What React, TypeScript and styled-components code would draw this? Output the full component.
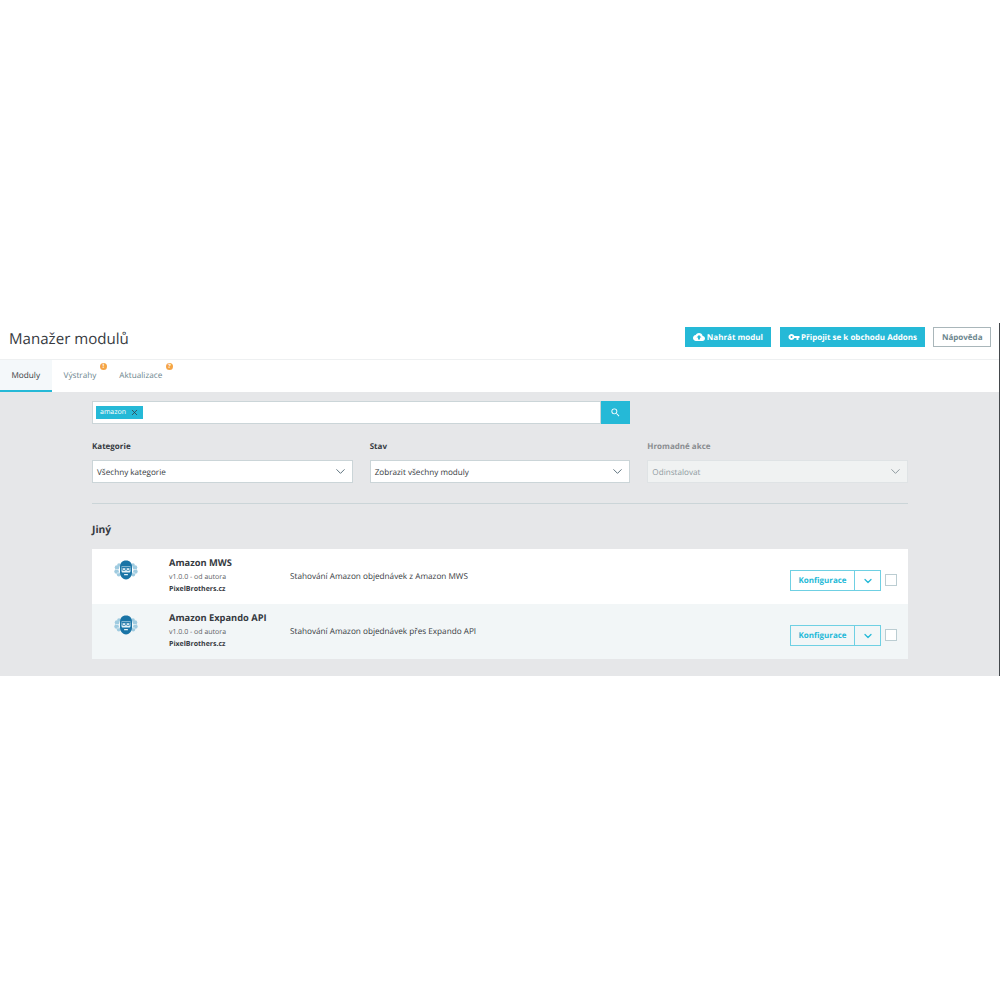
import React from 'react'
import styled, { createGlobalStyle } from 'styled-components'
import { ChevronDown, X } from 'lucide-react'

const GlobalStyle = createGlobalStyle`
  html, body {
    margin: 0;
    padding: 0;
    background: #fff;
    font-family: "Open Sans", "Liberation Sans", sans-serif;
    text-rendering: geometricPrecision;
  }
  * { box-sizing: border-box; }
`
const Page = styled.div`
  width: 1000px;
  height: 1000px;
  padding-top: 323px;
`
const Frame = styled.div`
  height: 353px;
  display: flex;
  flex-direction: column;
  border-right: 1px solid #44484c;
`
const Header = styled.header`
  height: 37px;
  display: flex;
  align-items: flex-start;
  justify-content: space-between;
  padding: 4px 8px 0 9px;
  border-bottom: 1px solid #eef0f1;
`
const Title = styled.h1`
  margin: 0;
  font-size: 15.1px;
  line-height: 24px;
  font-weight: 400;
  color: #363a41;
`
const HeaderActions = styled.div`
  display: flex;
  gap: 8.5px;
`
const HeadButton = styled.button<{ $outline?: boolean }>`
  height: 20px;
  padding: 0 ${p => (p.$outline ? '7.5px' : '7px')};
  display: flex;
  align-items: center;
  gap: 1.5px;
  font: 700 8px "Open Sans", sans-serif;
  text-rendering: geometricPrecision;
  color: ${p => (p.$outline ? '#6c868e' : '#fff')};
  background: ${p => (p.$outline ? '#fff' : '#25b9d7')};
  border: 1px solid ${p => (p.$outline ? '#a9b6ba' : '#25b9d7')};
`
const Tabs = styled.nav`
  height: 32px;
  display: flex;
  background: #fff;
  box-shadow: 0 1px 1px rgba(0, 0, 0, 0.06);
`
const Tab = styled.div<{ $active?: boolean }>`
  position: relative;
  height: 32px;
  padding: 0 11.5px;
  margin-right: ${p => (p.$active ? '0.5px' : '0')};
  display: flex;
  align-items: center;
  font-size: 8.2px;
  color: ${p => (p.$active ? '#363a41' : '#6c868e')};
  background: ${p => (p.$active ? '#f4f8fa' : '#fff')};
  border-bottom: 2px solid ${p => (p.$active ? '#25b9d7' : 'transparent')};
`
const Badge = styled.span`
  position: absolute;
  top: 3px;
  right: 1px;
  width: 7px;
  height: 7px;
  border-radius: 50%;
  background: #f5a445;
  color: #fff;
  font-size: 6px;
  font-weight: 700;
  line-height: 7px;
  text-align: center;
`
const Content = styled.main`
  flex: 1;
  background: #e6e7e9;
  padding: 9px 92px 0;
`
const SearchRow = styled.div`
  width: 538px;
  height: 23px;
  display: flex;
`
const SearchField = styled.div`
  flex: 1;
  background: #fff;
  border: 1px solid #cbd5d8;
  padding: 4px 3px;
  display: flex;
`
const Tag = styled.span`
  height: 13px;
  width: 47px;
  padding: 0 4px;
  display: flex;
  align-items: center;
  justify-content: space-between;
  background: #25b9d7;
  color: #fff;
  font-size: 7px;
`
const SearchButton = styled.button`
  width: 29px;
  border: 0;
  padding: 0;
  display: flex;
  align-items: center;
  justify-content: center;
  background: #25b9d7;
  color: #fff;
`
const Filters = styled.div`
  display: flex;
  gap: 17px;
  margin-top: 17px;
  padding-bottom: 20px;
  border-bottom: 1px solid #cbd5d8;
  width: 816px;
`
const Filter = styled.div<{ $disabled?: boolean }>`
  width: 261px;
  color: ${p => (p.$disabled ? '#8a8d90' : '#363a41')};
`
const FilterLabel = styled.div`
  font-size: 8px;
  font-weight: 700;
  line-height: 12px;
  margin-bottom: 7px;
`
const Select = styled.div<{ $disabled?: boolean }>`
  height: 23px;
  padding: 1px 4px 0 4px;
  display: flex;
  align-items: center;
  justify-content: space-between;
  font-size: 8.15px;
  color: ${p => (p.$disabled ? '#8f9aa0' : '#363a41')};
  background: ${p => (p.$disabled ? '#f0f2f2' : '#fff')};
  border: 1px solid ${p => (p.$disabled ? '#dfe3e5' : '#cbd5d8')};
  svg {
    margin-top: -1px;
    color: ${p => (p.$disabled ? '#8f9aa0' : '#5f7480')};
  }
`
const SectionTitle = styled.h2`
  margin: 18px 0 11px;
  font-size: 10.3px;
  line-height: 16px;
  font-weight: 700;
  color: #363a41;
`
const List = styled.div`
  width: 816px;
`
const Row = styled.div<{ $shaded?: boolean }>`
  height: 55px;
  display: flex;
  background: ${p => (p.$shaded ? '#f2f6f7' : '#fff')};
`
const LogoCell = styled.div`
  width: 77px;
  padding: 11px 0 0 22px;
`
const Info = styled.div`
  width: 121px;
  padding-top: 7px;
  color: #363a41;
`
const ModuleName = styled.div`
  font-size: 9.3px;
  line-height: 14px;
  font-weight: 700;
  white-space: nowrap;
`
const Meta = styled.div`
  font-size: 7px;
  line-height: 12px;
  margin-top: 2px;
  color: #5d6165;
`
const Author = styled.div`
  font-size: 7px;
  line-height: 12px;
  font-weight: 700;
`
const Description = styled.div`
  flex: 1;
  padding-top: 22px;
  font-size: 8.2px;
  line-height: 12px;
  color: #363a41;
`
const Actions = styled.div`
  display: flex;
  align-items: flex-start;
  gap: 4px;
  padding: 21px 11px 0 0;
`
const Split = styled.div`
  height: 21px;
  display: flex;
  border: 1px solid #6fd0e3;
  color: #25b9d7;
`
const ConfigButton = styled.div`
  width: 64px;
  display: flex;
  align-items: center;
  justify-content: center;
  font-size: 8px;
  font-weight: 700;
  border-right: 1px solid #6fd0e3;
`
const CaretButton = styled.div`
  width: 25px;
  display: flex;
  align-items: center;
  justify-content: center;
`
const Check = styled.div`
  width: 12px;
  height: 12px;
  margin-top: 4px;
  background: #fff;
  border: 1px solid #bbcdd2;
`

function CloudIcon() {
  return (
    <svg width="12" height="12" viewBox="0 0 24 24" fill="#fff">
      <path d="M19.35 10.04C18.67 6.59 15.64 4 12 4 9.11 4 6.6 5.64 5.35 8.04 2.34 8.36 0 10.91 0 14c0 3.31 2.69 6 6 6h13c2.76 0 5-2.24 5-5 0-2.64-2.05-4.78-4.65-4.96zM14 13v4h-4v-4H7l5-5 5 5h-3z" />
    </svg>
  )
}

function KeyIcon() {
  return (
    <svg width="12" height="12" viewBox="0 0 24 24" fill="#fff">
      <path d="M12.65 10C11.83 7.67 9.61 6 7 6c-3.31 0-6 2.69-6 6s2.69 6 6 6c2.61 0 4.83-1.67 5.65-4H17v4h4v-4h2v-4H12.65zM7 14c-1.1 0-2-.9-2-2s.9-2 2-2 2 .9 2 2-.9 2-2 2z" />
    </svg>
  )
}

function SearchIcon() {
  return (
    <svg width="11" height="11" viewBox="0 0 24 24" fill="#fff">
      <path d="M15.5 14h-.79l-.28-.27A6.47 6.47 0 0 0 16 9.5 6.5 6.5 0 1 0 9.5 16c1.61 0 3.09-.59 4.23-1.57l.27.28v.79l5 4.99L20.49 19l-4.99-5zm-6 0C7.01 14 5 11.99 5 9.5S7.01 5 9.5 5 14 7.01 14 9.5 11.99 14 9.5 14z" />
    </svg>
  )
}

// head with hat, glasses and beard between two light, brain-like ears
function Logo() {
  return (
    <svg width="24" height="20" viewBox="0 0 24 20">
      <g fill="#9fcbe0">
        <circle cx="3" cy="7.5" r="2.3" />
        <circle cx="2.6" cy="11.5" r="2.3" />
        <circle cx="4.8" cy="14.5" r="2" />
        <circle cx="5" cy="5" r="1.8" />
        <circle cx="21" cy="7.5" r="2.3" />
        <circle cx="21.4" cy="11.5" r="2.3" />
        <circle cx="19.2" cy="14.5" r="2" />
        <circle cx="19" cy="5" r="1.8" />
      </g>
      <path d="M2 9.5h3M19 9.5h3M3 13h2.5M18.5 13H21" stroke="#e4f1f7" strokeWidth="0.7" />
      <path d="M12 0.5c4 0 6 2.6 6 6.5v5.5c0 4-3 7-6 7s-6-3-6-7V7c0-3.900 2-6.500 6-6.500z" fill="#1a74a6" />
      <path d="M7.500 6.500h9v4.500c0 1-.6 1.500-1.500 1.500H9c-.9 0-1.500-.5-1.500-1.500z" fill="#e4f1f7" />
      <path d="M7.500 7.500h9" stroke="#1a74a6" strokeWidth="0.9" />
      <rect x="8.300" y="7.800" width="3.200" height="2.600" rx="0.8" fill="none" stroke="#1a74a6" strokeWidth="0.8" />
      <rect x="12.500" y="7.800" width="3.200" height="2.600" rx="0.8" fill="none" stroke="#1a74a6" strokeWidth="0.8" />
      <rect x="10" y="14" width="4" height="1.300" rx="0.6" fill="#e4f1f7" />
    </svg>
  )
}

function Module(props: { name: string; description: string; shaded?: boolean }) {
  return (
    <Row $shaded={props.shaded}>
      <LogoCell><Logo /></LogoCell>
      <Info>
        <ModuleName>{props.name}</ModuleName>
        <Meta>v1.0.0 - od autora</Meta>
        <Author>PixelBrothers.cz</Author>
      </Info>
      <Description>{props.description}</Description>
      <Actions>
        <Split>
          <ConfigButton>Konfigurace</ConfigButton>
          <CaretButton><ChevronDown size={12} strokeWidth={2.5} /></CaretButton>
        </Split>
        <Check />
      </Actions>
    </Row>
  )
}

export default function App() {
  return (
    <Page>
      <GlobalStyle />
      <Frame>
        <Header>
          <Title>Manažer modulů</Title>
          <HeaderActions>
            <HeadButton><CloudIcon />Nahrát modul</HeadButton>
            <HeadButton><KeyIcon />Připojit se k obchodu Addons</HeadButton>
            <HeadButton $outline>Nápověda</HeadButton>
          </HeaderActions>
        </Header>
        <Tabs>
          <Tab $active>Moduly</Tab>
          <Tab>Výstrahy<Badge>!</Badge></Tab>
          <Tab>Aktualizace<Badge>?</Badge></Tab>
        </Tabs>
        <Content>
          <SearchRow>
            <SearchField>
              <Tag>amazon<X size={9} color="#363a41" /></Tag>
            </SearchField>
            <SearchButton><SearchIcon /></SearchButton>
          </SearchRow>
          <Filters>
            <Filter>
              <FilterLabel>Kategorie</FilterLabel>
              <Select>Všechny kategorie<ChevronDown size={15} strokeWidth={1.6} /></Select>
            </Filter>
            <Filter>
              <FilterLabel>Stav</FilterLabel>
              <Select>Zobrazit všechny moduly<ChevronDown size={15} strokeWidth={1.6} /></Select>
            </Filter>
            <Filter $disabled>
              <FilterLabel>Hromadné akce</FilterLabel>
              <Select $disabled>Odinstalovat<ChevronDown size={15} strokeWidth={1.6} /></Select>
            </Filter>
          </Filters>
          <SectionTitle>Jiný</SectionTitle>
          <List>
            <Module name="Amazon MWS" description="Stahování Amazon objednávek z Amazon MWS" />
            <Module shaded name="Amazon Expando API" description="Stahování Amazon objednávek přes Expando API" />
          </List>
        </Content>
      </Frame>
    </Page>
  )
}
